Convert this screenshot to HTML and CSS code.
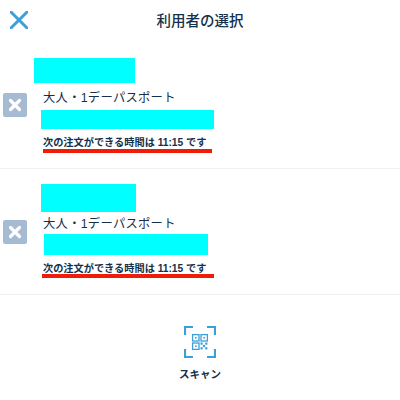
FILE: index.html
```html
<!DOCTYPE html>
<html lang="ja">
<head>
<meta charset="utf-8">
<title>利用者の選択</title>
<link rel="stylesheet" href="styles.css">
</head>
<body>
<div class="page">
  <header class="top">
    <svg class="close" viewBox="0 0 18 18" width="18" height="18"><path d="M1.2 1.2 16.8 16.8M16.8 1.2 1.2 16.8" stroke="#3d9fd8" stroke-width="3" stroke-linecap="round" fill="none"/></svg>
    <h1 class="title">利用者の選択</h1>
  </header>
  <section class="row row-a">
    <button class="remove"><svg viewBox="0 0 24 24" width="24" height="24"><path d="M7.5 7.5 16.5 16.5M16.5 7.5 7.5 16.5" stroke="#fff" stroke-width="3.2" stroke-linecap="round"/></svg></button>
    <div class="info">
      <div class="mask a1"></div>
      <p class="ticket t-a">大人・1デーパスポート</p>
      <div class="mask a2"></div>
      <p class="notice n-a">次の注文ができる時間は 11:15 です</p>
      <div class="line l-a"></div>
    </div>
  </section>
  <section class="row row-b">
    <button class="remove"><svg viewBox="0 0 24 24" width="24" height="24"><path d="M7.5 7.5 16.5 16.5M16.5 7.5 7.5 16.5" stroke="#fff" stroke-width="3.2" stroke-linecap="round"/></svg></button>
    <div class="info">
      <div class="mask b1"></div>
      <p class="ticket t-b">大人・1デーパスポート</p>
      <div class="mask b2"></div>
      <p class="notice n-b">次の注文ができる時間は 11:15 です</p>
      <div class="line l-b"></div>
    </div>
  </section>
  <section class="scan">
    <svg viewBox="0 0 32 32" width="32" height="32">
      <path d="M1 9V1H9M23 1H31V9M31 23V31H23M9 31H1V23" fill="none" stroke="#3d9fd8" stroke-width="2.2"/>
      <g fill="none" stroke="#3d9fd8" stroke-width="1.3">
        <rect x="8.6" y="8.6" width="6.4" height="6.4"/>
        <rect x="17" y="8.6" width="6.4" height="6.4"/>
        <rect x="8.6" y="17" width="6.4" height="6.4"/>
      </g>
      <g fill="#3d9fd8">
        <rect x="11" y="11" width="1.6" height="1.6"/>
        <rect x="19.4" y="11" width="1.6" height="1.6"/>
        <rect x="11" y="19.4" width="1.6" height="1.6"/>
        <rect x="16.5" y="16.5" width="2.2" height="2.2"/>
        <rect x="21.2" y="16.5" width="2.2" height="2.2"/>
        <rect x="18.9" y="18.9" width="2.2" height="2.2"/>
        <rect x="16.5" y="21.2" width="2.2" height="2.2"/>
        <rect x="21.2" y="21.2" width="2.2" height="2.2"/>
      </g>
    </svg>
    <span class="scan-label">スキャン</span>
  </section>
</div>
</body>
</html>
```
FILE: styles.css
```css
* { box-sizing: border-box; }
html, body { margin: 0; padding: 0; background: #fff; }
body { font-family: "Liberation Sans", "Noto Sans CJK JP", sans-serif; color: #14304a; }
.page { width: 400px; height: 400px; overflow: hidden; }
.top { position: relative; height: 42px; display: flex; align-items: center; justify-content: center; }
.close { position: absolute; left: 10px; top: 11px; }
.title { margin: 0; font-size: 14.5px; line-height: 20px; font-weight: 500; }
.row { display: flex; align-items: center; padding-left: 3px; border-bottom: 1px solid #eef0f2; }
.row-a { height: 127px; }
.row-b { height: 126px; }
.remove { flex: none; width: 24px; height: 24px; padding: 0; border: 0; border-radius: 2px; background: #a6bbd2; display: flex; }
.info { display: flex; flex-direction: column; align-items: flex-start; }
.mask { background: #00ffff; }
.a1 { width: 101px; height: 25px; margin-left: 7px; }
.a2 { width: 173px; height: 19px; margin-left: 14px; }
.b1 { width: 95px; height: 28px; margin-left: 14px; }
.b2 { width: 164px; height: 21px; margin-left: 17px; }
.ticket { margin: 0 0 0 16px; font-size: 12.3px; line-height: 18px; font-weight: 400; letter-spacing: 0.28px; white-space: nowrap; }
.t-a { margin-top: 6px; margin-bottom: 3px; }
.t-b { margin-top: 3px; margin-bottom: 1px; }
.notice { margin: 0 0 0 16px; font-size: 10.2px; line-height: 14px; font-weight: 700; white-space: nowrap; }
.n-a { margin-top: 7px; margin-bottom: -1px; }
.n-b { margin-top: 7px; margin-bottom: -1px; }
.line { height: 4px; background: #f01c0a; }
.l-a { width: 169px; margin-left: 16px; }
.l-b { width: 172px; margin-left: 15px; margin-top: -1px; margin-bottom: 2px; }
.scan { display: flex; flex-direction: column; align-items: center; padding-top: 31px; }
.scan-label { margin-top: 9px; font-size: 10.5px; line-height: 14px; font-weight: 700; }
```
